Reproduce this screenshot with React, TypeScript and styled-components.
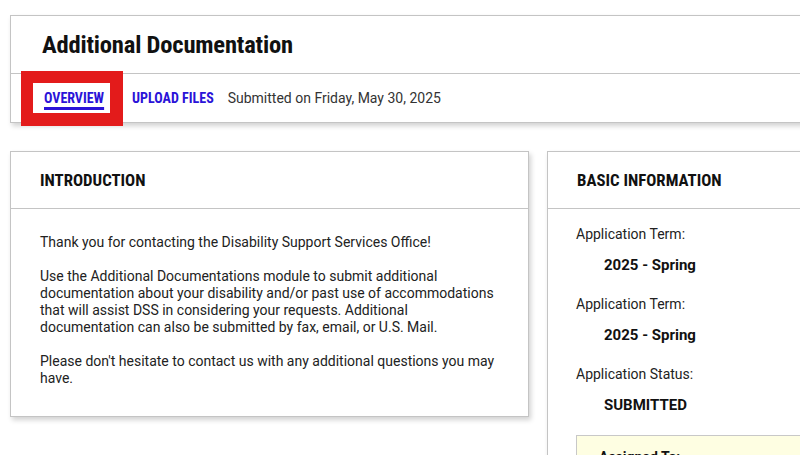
import React from "react";
import styled, { createGlobalStyle } from "styled-components";

const Global = createGlobalStyle`
  html, body { margin: 0; padding: 0; background: #fff; overflow: hidden; }
  body { font-family: Roboto, "Noto Sans", sans-serif; color: #222; }
`;

const Page = styled.div`
  width: 800px;
  height: 455px;
  overflow: hidden;
  padding: 15px 0 0 10px;
  box-sizing: border-box;
  display: flex;
  flex-direction: column;
  gap: 28px;
`;

const Card = styled.section<{ $width: number }>`
  width: ${(p) => p.$width}px;
  flex: none;
  background: #fff;
  border: 1px solid #c4c4c4;
  box-shadow: 2px 3px 5px rgba(0, 0, 0, 0.18);
  box-sizing: border-box;
`;

const TitleBar = styled.div`
  height: 57px;
  padding: 0 0 0 31px;
  display: flex;
  align-items: center;
  border-bottom: 1px solid #c4c4c4;
`;

const Title = styled.h1`
  margin: 0;
  font-family: "Roboto Condensed", "Liberation Sans Narrow", Roboto, sans-serif;
  font-weight: 700;
  font-size: 24.6px;
  color: #111;
  letter-spacing: -0.2px;
`;

const TabRow = styled.nav`
  position: relative;
  height: 48px;
  display: flex;
  align-items: center;
  padding-left: 33px;
  gap: 28px;
`;

const Tab = styled.a<{ $active?: boolean }>`
  font-family: "Roboto Condensed", "Liberation Sans Narrow", Roboto, sans-serif;
  font-weight: 700;
  font-size: 14px;
  color: #2a13d8;
  text-decoration: ${(p) => (p.$active ? "underline" : "none")};
  text-decoration-thickness: 3px;
  text-underline-offset: 4px;
  cursor: pointer;
`;

const Submitted = styled.span`
  font-size: 14px;
  color: #333;
  margin-left: -14px;
`;

const Highlight = styled.div`
  position: absolute;
  left: 10px;
  top: -3px;
  width: 77px;
  height: 30px;
  border: 12px solid #e31b1b;
  border-right-width: 13px;
  border-bottom-width: 13px;
`;

const Columns = styled.div`
  display: flex;
  gap: 18px;
  align-items: flex-start;
`;

const CardHeader = styled.div`
  height: 56px;
  display: flex;
  align-items: center;
  padding-left: 29px;
  border-bottom: 1px solid #c4c4c4;
`;

const CardTitle = styled.h2`
  margin: 0;
  font-family: "Roboto Condensed", "Liberation Sans Narrow", Roboto, sans-serif;
  font-weight: 700;
  font-size: 16.8px;
  color: #111;
`;

const IntroBody = styled.div`
  padding: 25px 29px 29px 29px;
  font-size: 14px;
  line-height: 17px;
  color: #222;
  display: flex;
  flex-direction: column;
  gap: 17px;
`;

const P = styled.p`
  margin: 0;
`;

const InfoBody = styled.div`
  padding: 17px 0 0 28px;
  display: flex;
  flex-direction: column;
`;

const Label = styled.div`
  font-size: 14px;
  line-height: 17px;
  color: #222;
`;

const Value = styled.div`
  font-size: 15px;
  font-weight: 700;
  line-height: 18px;
  color: #111;
  padding: 13px 0 22px 28px;
`;

const Assigned = styled.div`
  margin-top: -1px;
  background: #fefee2;
  border: 1px solid #c8c8c8;
  height: 60px;
  padding: 13px 0 0 22px;
  font-size: 14px;
  font-weight: 700;
  color: #111;
`;

export default function App() {
  return (
    <>
      <Global />
      <Page>
        <Card $width={800}>
          <TitleBar>
            <Title>Additional Documentation</Title>
          </TitleBar>
          <TabRow>
            <Tab $active>OVERVIEW</Tab>
            <Tab>UPLOAD FILES</Tab>
            <Submitted>Submitted on Friday, May 30, 2025</Submitted>
            <Highlight />
          </TabRow>
        </Card>
        <Columns>
          <Card $width={519}>
            <CardHeader>
              <CardTitle>INTRODUCTION</CardTitle>
            </CardHeader>
            <IntroBody>
              <P>Thank you for contacting the Disability Support Services Office!</P>
              <P>
                Use the Additional Documentations module to submit additional
                documentation about your disability and/or past use of accommodations
                that will assist DSS in considering your requests. Additional
                documentation can also be submitted by fax, email, or U.S. Mail.
              </P>
              <P>Please don't hesitate to contact us with any additional questions you may have.</P>
            </IntroBody>
          </Card>
          <Card $width={300}>
            <CardHeader>
              <CardTitle>BASIC INFORMATION</CardTitle>
            </CardHeader>
            <InfoBody>
              <Label>Application Term:</Label>
              <Value>2025 - Spring</Value>
              <Label>Application Term:</Label>
              <Value>2025 - Spring</Value>
              <Label>Application Status:</Label>
              <Value>SUBMITTED</Value>
              <Assigned>Assigned To:</Assigned>
            </InfoBody>
          </Card>
        </Columns>
      </Page>
    </>
  );
}
